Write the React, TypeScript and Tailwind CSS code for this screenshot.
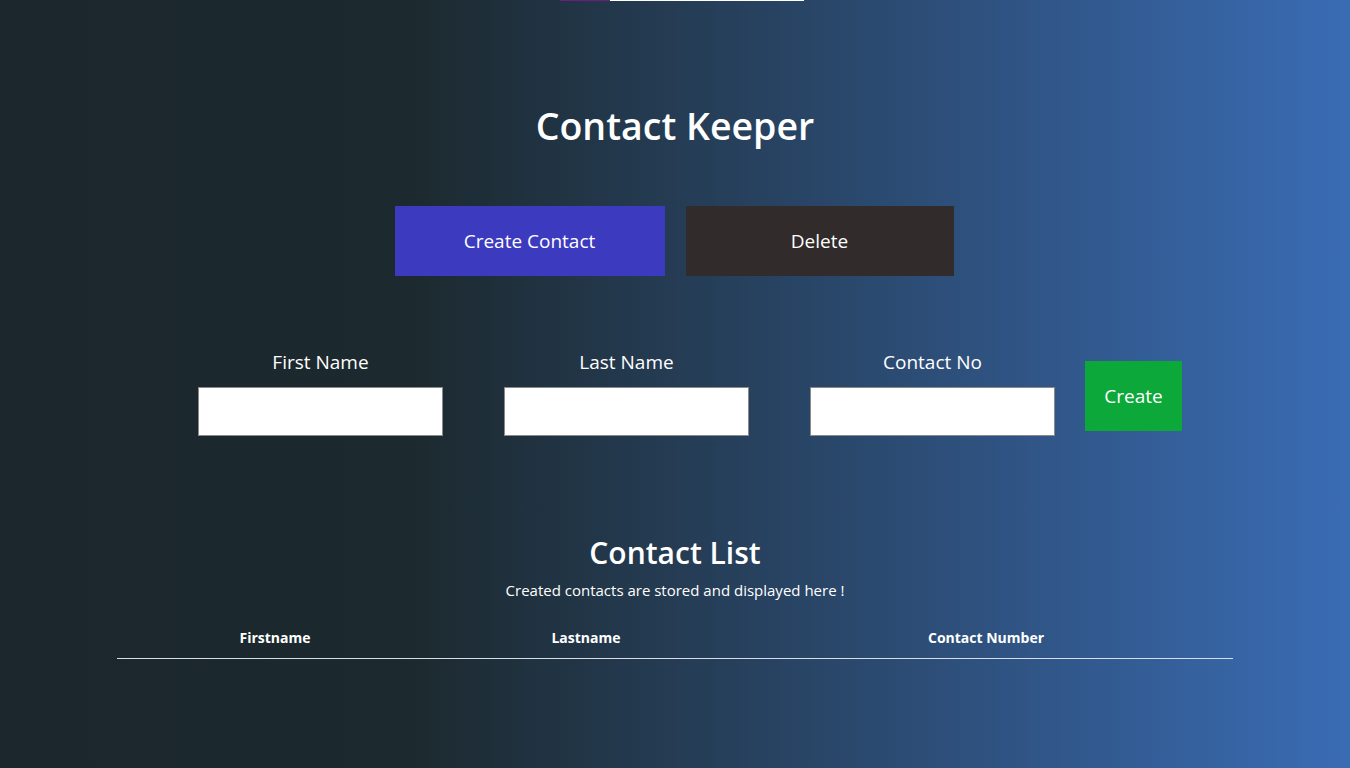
export default function App() {
  return (
    <div
      className="relative min-h-[768px] w-full overflow-hidden bg-[linear-gradient(to_right,#1b272c_0%,#1c292e_30%,#2b4a70_65%,#3a6cb4_100%)] text-white"
      style={{ fontFamily: '"Segoe UI", "Open Sans", "Noto Sans", sans-serif' }}
    >
      {/* loading bar */}
      <div className="absolute left-[560px] top-0 flex h-px">
        <div className="w-[50px] bg-[#6b1f7c]" />
        <div className="w-[194px] bg-white" />
      </div>

      <div className="flex flex-col items-center pt-[100px]">
        <h1 className="text-[37.5px] font-semibold leading-[52px]">Contact Keeper</h1>

        <div className="mt-[54px] flex gap-[21px] pr-[2px]">
          <button className="h-[70px] w-[270px] bg-[#3c3abf] text-[19px]">Create Contact</button>
          <button className="h-[70px] w-[268px] bg-[#312b2b] text-[19px]">Delete</button>
        </div>

        <div className="mt-[73px] flex items-start gap-[30px] pl-[30px]">
          <div className="flex gap-[61px]">
            {["First Name", "Last Name", "Contact No"].map((label) => (
              <label key={label} className="flex w-[245px] flex-col items-center">
                <span className="text-[19px] leading-[26px]">{label}</span>
                <input className="mt-[12px] h-[49px] w-[245px] border border-[#8a8a8a] bg-white text-black outline-none" />
              </label>
            ))}
          </div>
          <button className="mt-[12px] h-[70px] w-[97px] bg-[#0ca83a] text-[19px]">Create</button>
        </div>

        <h2 className="mt-[97px] text-[30px] font-semibold leading-[40px]">Contact List</h2>
        <p className="mt-[7px] text-[15px] leading-[20px]">Created contacts are stored and displayed here !</p>

        <div className="mt-[28px] w-[1116px]">
          <div className="grid grid-cols-[316px_306px_494px] border-b border-[#d5dde6] pb-[10px] text-[14px] font-bold leading-[20px]">
            <div className="text-center">Firstname</div>
            <div className="text-center">Lastname</div>
            <div className="text-center">Contact Number</div>
          </div>
        </div>
      </div>
    </div>
  );
}
